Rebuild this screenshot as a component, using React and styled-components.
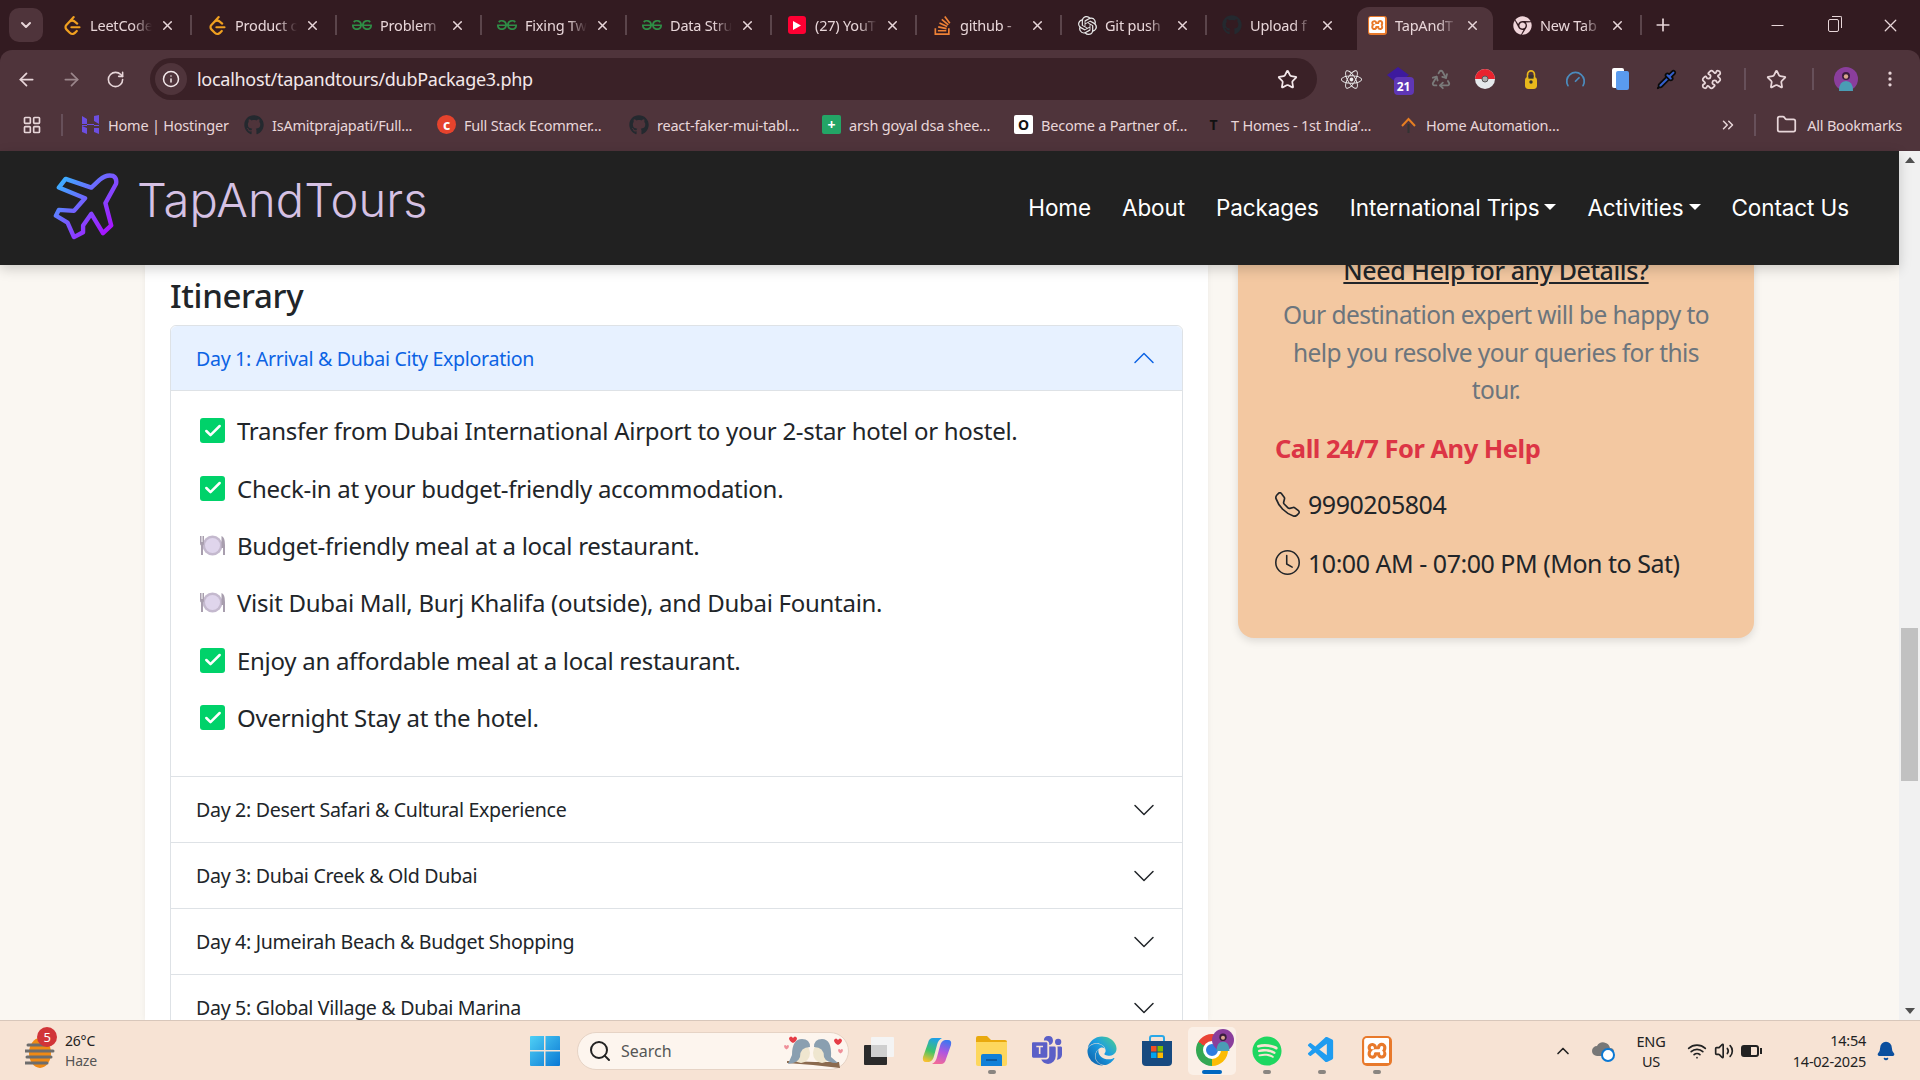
import styled, { createGlobalStyle } from 'styled-components'
import { ArrowLeft, ArrowRight, RotateCw, Info, Star, MoreVertical, X, Plus, Minus, ChevronDown, ChevronUp, Check, Search, Wifi, Volume2, Recycle, Gauge, Puzzle, Folder, LayoutGrid, ChevronsRight, Bell, Pipette } from 'lucide-react'
import { FaGithub, FaChrome, FaReact, FaSpotify, FaEdge } from 'react-icons/fa'
import { SiLeetcode, SiGeeksforgeeks, SiStackoverflow, SiOpenai, SiXampp } from 'react-icons/si'
import { BsChevronDown, BsChevronUp, BsTelephone, BsClock, BsMicrosoftTeams } from 'react-icons/bs'
import { VscVscode } from 'react-icons/vsc'

const UI = '"Noto Sans", "Open Sans", sans-serif'

const Global = createGlobalStyle`
  html, body { margin: 0; padding: 0; overflow: hidden; }
  body { font-family: ${UI}; color: #212529; }
  * { box-sizing: border-box; }
`

const Page = styled.div`
  width: 1920px;
  height: 1080px;
  display: flex;
  flex-direction: column;
  overflow: hidden;
  background: #331b21;
`

/* browser chrome */
const TabStrip = styled.div`
  height: 50px;
  flex: none;
  background: #331b21;
  display: flex;
  align-items: flex-end;
  padding-left: 9px;
  color: #e8d6d9;
`
const TabMenu = styled.div`
  width: 34px;
  height: 34px;
  margin: 0 4px 8px 0;
  border-radius: 10px;
  background: #4f343b;
  display: flex;
  align-items: center;
  justify-content: center;
  flex: none;
`
const Tab = styled.div`
  position: relative;
  width: 145px;
  height: 50px;
  flex: none;
  display: flex;
  align-items: center;
  padding: 0 17px 0 15px;
  gap: 8px;
  font-size: 14.5px;
  letter-spacing: -0.2px;
  &::before {
    content: '';
    position: absolute;
    top: 7px;
    bottom: 0;
    left: 5px;
    right: 4px;
    border-radius: 12px 12px 0 0;
    background: ${p => (p.$active ? '#4f343b' : 'transparent')};
  }
  &::after {
    content: '';
    position: absolute;
    right: 0;
    top: 15px;
    height: 20px;
    width: 2px;
    background: ${p => (p.$sep ? '#5b454b' : 'transparent')};
  }
  & > * { position: relative; z-index: 1; }
`
const TabIcon = styled.span`
  width: 20px;
  height: 20px;
  flex: none;
  display: flex;
  align-items: center;
  justify-content: center;
  color: ${p => p.$color || 'inherit'};
`
const AppTile = styled.span`
  width: ${p => p.$size}px;
  height: ${p => p.$size}px;
  border-radius: ${p => Math.round(p.$size / 6)}px;
  background: ${p => p.$bg};
  color: #fff;
  display: flex;
  align-items: center;
  justify-content: center;
`
const TabTitle = styled.span`
  flex: 1;
  overflow: hidden;
  white-space: nowrap;
  -webkit-mask-image: linear-gradient(90deg, #000 70%, transparent 100%);
`
const NewTab = styled.div`
  width: 42px;
  height: 50px;
  display: flex;
  align-items: center;
  justify-content: center;
`
const WindowControls = styled.div`
  margin-left: auto;
  display: flex;
  height: 50px;
  align-items: center;
  gap: 41px;
  padding-right: 19px;
`
const RestoreIcon = styled.span`
  position: relative;
  width: 11px;
  height: 13px;
  border: 1.5px solid #e8d6d9;
  border-radius: 2px;
  &::after {
    content: '';
    position: absolute;
    top: -4px;
    right: -4px;
    width: 9px;
    height: 11px;
    border-top: 1.5px solid #e8d6d9;
    border-right: 1.5px solid #e8d6d9;
    border-radius: 0 2px 0 0;
  }
`
const Toolbar = styled.div`
  height: 50px;
  flex: none;
  background: #4f343b;
  border-radius: 12px 12px 0 0;
  display: flex;
  align-items: flex-end;
  padding: 0 0 0 16px;
  color: #e8d6d9;
`
const NavButtons = styled.div`
  width: 134px;
  height: 42px;
  flex: none;
  display: flex;
  align-items: center;
  gap: 24px;
`
const AddressBar = styled.div`
  width: 1167px;
  height: 42px;
  flex: none;
  border-radius: 21px;
  background: #3a2127;
  display: flex;
  align-items: center;
  padding: 0 19px 0 5px;
  font-size: 18px;
  letter-spacing: -0.28px;
  color: #f3e8ea;
`
const SiteInfo = styled.span`
  width: 32px;
  height: 32px;
  border-radius: 50%;
  background: #4f343b;
  display: flex;
  align-items: center;
  justify-content: center;
  margin-right: 10px;
`
const AddressText = styled.span`
  flex: 1;
`
const Extensions = styled.div`
  height: 42px;
  flex: 1;
  display: flex;
  align-items: center;
  padding-left: 11.5px;
`
const ExtSlot = styled.span`
  position: relative;
  width: 45px;
  height: 24px;
  flex: none;
  margin-left: ${p => p.$ml || 0}px;
  display: flex;
  justify-content: center;
  align-items: center;
  color: ${p => p.$color || 'inherit'};
`
const Divider = styled.span`
  width: 2px;
  height: ${p => p.$h || 20}px;
  background: #67505a;
  flex: none;
  margin: ${p => p.$m || '0'};
`
const CountBadge = styled.span`
  position: absolute;
  left: 18px;
  top: 10px;
  width: 20px;
  height: 18px;
  border-radius: 4px;
  background: #5f37b5;
  color: #fff;
  font-size: 12px;
  font-weight: 700;
  display: flex;
  align-items: center;
  justify-content: center;
`
const Bookmarks = styled.div`
  height: 51px;
  flex: none;
  background: #4f343b;
  display: flex;
  align-items: center;
  padding: 0 0 2px 22px;
  color: #e8d6d9;
  font-size: 14.5px;
  letter-spacing: -0.22px;
`
const Bookmark = styled.div`
  width: ${p => p.$w}px;
  flex: none;
  display: flex;
  align-items: center;
  gap: 8px;
  padding-left: ${p => p.$pad ?? 10}px;
  white-space: nowrap;
`
const BookmarkTail = styled.div`
  margin-left: auto;
  display: flex;
  align-items: center;
  padding-right: 18px;
  gap: 10px;
`
const CircleDot = styled.span`
  width: 19px;
  height: 19px;
  border-radius: ${p => (p.$square ? '2px' : '50%')};
  background: ${p => p.$bg};
  color: ${p => p.$fg || '#fff'};
  display: flex;
  align-items: center;
  justify-content: center;
  font-size: 14px;
  font-weight: 700;
  flex: none;
`

/* the page in the tab */
const Viewport = styled.div`
  flex: 1;
  min-height: 0;
  display: flex;
`
const Site = styled.div`
  width: 1899px;
  display: flex;
  flex-direction: column;
`
const Navbar = styled.header`
  height: 114px;
  flex: none;
  background: #212121;
  box-shadow: 0 4px 12px rgba(0, 0, 0, 0.18);
  position: relative;
  z-index: 2;
  display: flex;
  align-items: center;
  padding: 0 50px 0 53px;
`
const Brand = styled.div`
  display: flex;
  align-items: center;
  gap: 18px;
  margin-top: -4px;
`
const BrandName = styled.span`
  font-family: Inter, sans-serif;
  font-size: 47px;
  font-weight: 300;
  letter-spacing: 0.1px;
  color: #d6c1e4;
  margin-bottom: 14px;
`
const NavLinks = styled.nav`
  margin-left: auto;
  margin-top: -2px;
  display: flex;
  align-items: center;
  gap: 31px;
  font-family: Inter, sans-serif;
  font-size: 22.5px;
  font-weight: 400;
  letter-spacing: -0.1px;
  color: #fff;
`
const NavLink = styled.a`
  display: flex;
  align-items: center;
  gap: 5px;
`
const Caret = styled.span`
  width: 0;
  height: 0;
  border-top: 6px solid #fff;
  border-left: 6px solid transparent;
  border-right: 6px solid transparent;
`
const Content = styled.main`
  flex: 1;
  min-height: 0;
  overflow: hidden;
  background: #faf7f2;
  display: flex;
  align-items: flex-start;
  padding-left: 145px;
  gap: 30px;
`
const MainCard = styled.section`
  width: 1063px;
  height: 100%;
  flex: none;
  background: #fff;
  box-shadow: 0 0 6px rgba(0, 0, 0, 0.06);
  padding: 12px 25px 0;
`
const Heading = styled.h2`
  margin: 0 0 11px;
  font-size: 33px;
  line-height: 37px;
  font-weight: 500;
  letter-spacing: -0.35px;
  color: #212529;
`
const Accordion = styled.div`
  border: 1px solid #dee2e6;
  border-radius: 6px;
`
const AccordionHeader = styled.div`
  height: ${p => (p.$open ? 65 : 66)}px;
  display: flex;
  align-items: center;
  justify-content: space-between;
  padding: 0 26px 0 25px;
  font-size: 19.6px;
  letter-spacing: -0.32px;
  color: ${p => (p.$open ? '#0c63e4' : '#212529')};
  background: ${p => (p.$open ? '#e7f1ff' : '#fff')};
  border-bottom: 1px solid #dee2e6;
  border-radius: ${p => (p.$open ? '6px 6px 0 0' : '0')};
`
const ItemList = styled.ul`
  list-style: none;
  margin: 0;
  padding: 11px 29px 30px;
  border-bottom: 1px solid #dee2e6;
`
const Item = styled.li`
  height: 57.4px;
  display: flex;
  align-items: center;
  gap: 12px;
  font-size: 24px;
  letter-spacing: -0.28px;
  color: #212529;
`
const CheckBox = styled.span`
  width: 25px;
  height: 25px;
  flex: none;
  border-radius: 3px;
  background: #00d26a;
  color: #fff;
  display: flex;
  align-items: center;
  justify-content: center;
`
const SideCard = styled.aside`
  width: 516px;
  flex: none;
  margin-top: -20px;
  padding: 9px 37px 57px;
  background: #f3c8a1;
  border-radius: 16px;
  box-shadow: 0 3px 8px rgba(0, 0, 0, 0.12);
`
const HelpTitle = styled.h3`
  margin: 0 0 10px;
  font-size: 25px;
  line-height: 32px;
  font-weight: 500;
  letter-spacing: -0.42px;
  text-align: center;
  text-decoration: underline;
  color: #212529;
`
const HelpText = styled.p`
  margin: 0;
  font-size: 24.5px;
  line-height: 37.6px;
  letter-spacing: -0.57px;
  text-align: center;
  color: #6c757d;
`
const CallLine = styled.h4`
  margin: 23px 0 0;
  font-size: 25.5px;
  line-height: 32px;
  font-weight: 700;
  letter-spacing: -0.5px;
  color: #dc3545;
`
const ContactRow = styled.div`
  display: flex;
  align-items: center;
  gap: 8px;
  margin-top: 22.5px;
  height: 36px;
  font-size: 25px;
  letter-spacing: -0.48px;
  color: #212529;
`
const Scrollbar = styled.div`
  width: 21px;
  background: #f1f1f1;
  display: flex;
  flex-direction: column;
  align-items: center;
  justify-content: space-between;
  padding: 6px 0;
  position: relative;
`
const Arrow = styled.span`
  width: 0;
  height: 0;
  border-left: 5px solid transparent;
  border-right: 5px solid transparent;
  border-${p => (p.$down ? 'top' : 'bottom')}: 6px solid #505050;
`
const Thumb = styled.span`
  position: absolute;
  top: 477px;
  left: 2px;
  width: 17px;
  height: 153px;
  background: #c1c1c1;
`

/* windows taskbar */
const Taskbar = styled.footer`
  height: 60px;
  flex: none;
  background: #f7e3d4;
  border-top: 1px solid #d8c7bb;
  display: grid;
  grid-template-columns: 530px auto 1fr;
  align-items: center;
  color: #222;
`
const Weather = styled.div`
  display: flex;
  align-items: center;
  gap: 8px;
  padding-left: 25px;
  font-size: 14px;
  line-height: 20px;
  letter-spacing: -0.2px;
`
const WeatherIcon = styled.span`
  position: relative;
  width: 32px;
  height: 34px;
  display: block;
`
const AlertBadge = styled.span`
  position: absolute;
  top: -7px;
  left: 12px;
  width: 20px;
  height: 20px;
  border-radius: 50%;
  background: #d13438;
  color: #fff;
  font-size: 13px;
  display: flex;
  align-items: center;
  justify-content: center;
`
const WeatherSub = styled.div`
  color: #555;
`
const Center = styled.div`
  display: flex;
  align-items: center;
`
const SearchBox = styled.div`
  width: 272px;
  height: 38px;
  margin-left: 17px;
  border-radius: 19px;
  background: #fdf5ee;
  border: 1px solid #e6d3c5;
  display: flex;
  align-items: center;
  gap: 9px;
  padding: 0 2px 0 10px;
  font-size: 16px;
  color: #555;
`
const SearchLabel = styled.span`
  flex: 1;
`
const DockSlot = styled.div`
  position: relative;
  width: ${p => (p.$active ? 48 : p.$w || 55)}px;
  height: 48px;
  flex: none;
  border-radius: 5px;
  display: flex;
  align-items: center;
  justify-content: center;
  margin: 0 ${p => (p.$active ? 3.5 : 0)}px;
  background: ${p => (p.$active ? '#fbf0e7' : 'transparent')};
  &::after {
    content: '';
    display: ${p => (p.$dot || p.$active ? 'block' : 'none')};
    position: absolute;
    bottom: 1px;
    left: 50%;
    transform: translateX(-50%);
    width: ${p => (p.$active ? 20 : 8)}px;
    height: 4px;
    border-radius: 2px;
    background: ${p => (p.$active ? '#0067c0' : '#8a8580')};
  }
`
const ChromeLogo = styled.span`
  width: 32px;
  height: 32px;
  border-radius: 50%;
  background: conic-gradient(from -60deg, #ea4335 0 120deg, #fbbc04 120deg 240deg, #34a853 240deg 360deg);
  display: flex;
  align-items: center;
  justify-content: center;
  margin-top: -2px;
  &::after {
    content: '';
    width: 12px;
    height: 12px;
    border-radius: 50%;
    background: #2f7de1;
    border: 3px solid #fff;
    box-sizing: content-box;
  }
`
const AvatarOverlay = styled.span`
  position: absolute;
  top: 2px;
  right: 2px;
`
const Tray = styled.div`
  justify-self: end;
  display: flex;
  align-items: center;
  padding-right: 14px;
  font-size: 14px;
`
const TraySlot = styled.span`
  width: ${p => p.$w || 28}px;
  flex: none;
  display: flex;
  justify-content: center;
`
const Lang = styled.div`
  width: 44px;
  text-align: center;
  line-height: 20px;
  font-size: 14.5px;
  letter-spacing: -0.2px;
  margin-right: 10px;
`
const Clock = styled.div`
  width: 100px;
  text-align: right;
  line-height: 21px;
  font-size: 14.5px;
  letter-spacing: -0.25px;
  margin-left: 3px;
`
const BatteryIcon = styled.span`
  position: relative;
  width: 18px;
  height: 12px;
  border: 2px solid #222;
  border-radius: 3px;
  display: block;
  background: linear-gradient(90deg, #222 55%, transparent 55%);
  &::after {
    content: '';
    position: absolute;
    right: -5px;
    top: 1px;
    width: 2px;
    height: 6px;
    background: #222;
  }
`

const YoutubeIcon = () => (
  <AppTile $size={18} $bg="#ff0033">
    <svg width="8" height="9" viewBox="0 0 8 9"><path d="M0 0l8 4.5L0 9z" fill="#fff" /></svg>
  </AppTile>
)

const XamppTile = ({ size }) => (
  <AppTile $size={size} $bg="#e8792b">
    <SiXampp size={size * 0.86} />
  </AppTile>
)

const tabs = [
  { title: 'LeetCode', icon: <SiLeetcode size={19} />, color: '#f0a020', sep: true },
  { title: 'Product o', icon: <SiLeetcode size={19} />, color: '#f0a020', sep: true },
  { title: 'Problem', icon: <SiGeeksforgeeks size={20} />, color: '#2f8d46', sep: true },
  { title: 'Fixing Tw', icon: <SiGeeksforgeeks size={20} />, color: '#2f8d46', sep: true },
  { title: 'Data Stru', icon: <SiGeeksforgeeks size={20} />, color: '#2f8d46', sep: true },
  { title: '(27) YouT', icon: <YoutubeIcon />, sep: true },
  { title: 'github -', icon: <SiStackoverflow size={19} />, color: '#ef8236', sep: true },
  { title: 'Git push', icon: <SiOpenai size={19} />, color: '#e8e8e8', sep: true },
  { title: 'Upload f', icon: <FaGithub size={20} />, color: '#24292f' },
  { title: 'TapAndT', icon: <XamppTile size={19} />, active: true },
  { title: 'New Tab', icon: <FaChrome size={19} />, color: '#f0d5da', sep: true },
]

const marks = [
  { w: 153, pad: 0, label: 'Home | Hostinger', icon: <svg width="19" height="20" viewBox="0 0 19 20"><path d="M1 1l5 3v5H1zM13 1l5-1v9l-5-3zM1 11h17v-1H1zM1 11l5 2v6l-5-2zM13 13h5v6l-5-2zM6 9h7v2H6z" fill="#6c4ee0" /></svg> },
  { w: 193, label: 'IsAmitprajapati/Full...', icon: <FaGithub size={20} color="#24292f" /> },
  { w: 192, label: 'Full Stack Ecommer...', icon: <CircleDot $bg="#e5432d">c</CircleDot> },
  { w: 193, label: 'react-faker-mui-tabl...', icon: <FaGithub size={20} color="#24292f" /> },
  { w: 192, label: 'arsh goyal dsa shee...', icon: <CircleDot $bg="#23a566" $square>+</CircleDot> },
  { w: 190, label: 'Become a Partner of...', icon: <CircleDot $bg="#fff" $fg="#111" $square>O</CircleDot> },
  { w: 195, label: 'T Homes - 1st India’...', icon: <CircleDot $bg="transparent" $fg="#111">T</CircleDot> },
  { w: 175, label: 'Home Automation...', icon: <svg width="19" height="20" viewBox="0 0 19 20" fill="none"><path d="M3 11l6.5-7 6.5 7" stroke="#e67e22" strokeWidth="2" /><path d="M9.5 9v9" stroke="#333" strokeWidth="2" /></svg> },
]

const plan = [
  { text: 'Transfer from Dubai International Airport to your 2-star hotel or hostel.', meal: false },
  { text: 'Check-in at your budget-friendly accommodation.', meal: false },
  { text: 'Budget-friendly meal at a local restaurant.', meal: true },
  { text: 'Visit Dubai Mall, Burj Khalifa (outside), and Dubai Fountain.', meal: true },
  { text: 'Enjoy an affordable meal at a local restaurant.', meal: false },
  { text: 'Overnight Stay at the hotel.', meal: false },
]

const otherDays = [
  'Day 2: Desert Safari & Cultural Experience',
  'Day 3: Dubai Creek & Old Dubai',
  'Day 4: Jumeirah Beach & Budget Shopping',
  'Day 5: Global Village & Dubai Marina',
]

const PlaneLogo = () => (
  <svg width="66" height="67" viewBox="-1 -1 68 69" fill="none">
    <defs>
      <linearGradient id="planeGrad" x1="0" y1="0" x2="1" y2="1">
        <stop offset="0" stopColor="#2fc0ff" />
        <stop offset="0.5" stopColor="#7b55ff" />
        <stop offset="1" stopColor="#b400ff" />
      </linearGradient>
    </defs>
    <path
      d="M61 2Q65 4 64 10L53 30L59 53L50.5 61L38.5 41L30 53L30 60L20.6 65L14 50L2 43L5 37L20.6 38L32 25L5 14L12 5L38.5 14L47 6Q54 0 61 2Z"
      stroke="url(#planeGrad)"
      strokeWidth="4.5"
      strokeLinejoin="round"
    />
  </svg>
)

const PlateIcon = () => (
  <svg width="25" height="25" viewBox="0 0 25 25">
    <circle cx="12.5" cy="12.5" r="10" fill="#c4b9ce" />
    <circle cx="12.5" cy="12.5" r="7.5" fill="#dfd5ec" />
    <path d="M0 3v7q0 2 1 2.500V22h2v-9.500q1-.5 1-2.500V3H3v6H2.500V3h-1v6H1V3zM21.500 3q3.500 1 3.500 9v10h-2v-7h-1.500z" fill="#a89eae" />
  </svg>
)

const Avatar = ({ size }) => (
  <svg width={size} height={size} viewBox="0 0 24 24">
    <circle cx="12" cy="12" r="12" fill="#8a3e9c" />
    <path d="M5 24q0-10 7-10t7 10z" fill="#4a9db5" />
    <circle cx="12" cy="9" r="4" fill="#3a1d3d" />
    <circle cx="12" cy="9.5" r="2.2" fill="#d9a78e" />
  </svg>
)

const Windows = () => (
  <svg width="30" height="30" viewBox="0 0 30 30">
    <defs>
      <linearGradient id="winGrad" x1="0" y1="0" x2="1" y2="1">
        <stop offset="0" stopColor="#4fd0f5" />
        <stop offset="1" stopColor="#0a78d4" />
      </linearGradient>
      <linearGradient id="edgeGrad" x1="1" y1="0" x2="0" y2="1">
        <stop offset="0" stopColor="#4fd18b" />
        <stop offset="0.45" stopColor="#1b9de2" />
        <stop offset="1" stopColor="#0c59a4" />
      </linearGradient>
    </defs>
    <path d="M0 1q0-1 1-1h13v14H0zM15.500 0H29q1 0 1 1v13H15.500zM0 15.500h14V30H1q-1 0-1-1zM15.500 15.500H30V29q0 1-1 1H15.500z" fill="url(#winGrad)" />
  </svg>
)

const Birds = () => (
  <svg width="62" height="36" viewBox="0 0 62 36">
    <path d="M3 30l26 2 27 3-1-6-24 0-28-1z" fill="#8b6a4e" />
    <ellipse cx="17" cy="20" rx="9" ry="10" fill="#efe6cf" />
    <path d="M8 22q0-16 10-16 8 0 8 8-10 0-10 10-2 6-12 7z" fill="#8a9fb0" />
    <ellipse cx="38" cy="20" rx="9" ry="10" fill="#efe6cf" />
    <path d="M47 24q1-18-9-18-8 0-8 8 10 0 10 10 2 6 14 6z" fill="#8a9fb0" />
    <path d="M5 5q2-3 4 0 2-3 4 0 0 3-4 5-4-2-4-5zM50 7q2-3 4 0 2-3 4 0 0 3-4 5-4-2-4-5z" fill="#e53c46" />
    <path d="M0 13q1-2 2.500 0 1.500-2 2.500 0 0 2-2.500 3.500Q0 15 0 13zM54 17q1-2 2.500 0 1.500-2 2.500 0 0 2-2.500 3.500Q54 19 54 17z" fill="#ef8f99" />
  </svg>
)

const Copilot = () => (
  <svg width="30" height="30" viewBox="0 0 30 30">
    <defs>
      <linearGradient id="copA" x1="0.6" y1="0" x2="0.3" y2="1">
        <stop offset="0" stopColor="#1f9fe8" />
        <stop offset="0.55" stopColor="#3fc46a" />
        <stop offset="1" stopColor="#f7c030" />
      </linearGradient>
      <linearGradient id="copB" x1="0.6" y1="0" x2="0.3" y2="1">
        <stop offset="0" stopColor="#f06a9a" />
        <stop offset="0.5" stopColor="#b055e0" />
        <stop offset="1" stopColor="#3a78f0" />
      </linearGradient>
    </defs>
    <path d="M11 2H20Q16 4 15 9L12 20Q11 25 7 26H4Q0 26 1 21L6 7Q7 2 11 2Z" fill="url(#copA)" />
    <path d="M11 2H20Q16 4 15 9L12 20Q11 25 7 26H4Q0 26 1 21L6 7Q7 2 11 2Z" fill="url(#copB)" transform="rotate(180 15 15)" />
  </svg>
)

const Files = () => (
  <svg width="31" height="30" viewBox="0 0 31 30">
    <path d="M0 2q0-2 2-2h9l4 4h14q2 0 2 2v3H0z" fill="#e9a90e" />
    <path d="M0 6h31v22q0 2-2 2H2q-2 0-2-2z" fill="#fdd75e" />
    <path d="M5 20q0-2 2-2h17q2 0 2 2v10H5z" fill="#1180d8" />
    <path d="M10 24h11" stroke="#0b4f90" strokeWidth="1.5" />
  </svg>
)

const Store = () => (
  <svg width="30" height="31" viewBox="0 0 30 31" fill="none">
    <path d="M8 6V3q0-2 2-2h10q2 0 2 2v3" stroke="#2aa8e8" strokeWidth="2" />
    <path d="M0 6h30v21q0 4-4 4H4q-4 0-4-4z" fill="#174a80" />
    <path d="M9 11h5.500v5.500H9z" fill="#f25022" />
    <path d="M15.500 11H21v5.500h-5.500z" fill="#7fba00" />
    <path d="M9 17.500h5.500V23H9z" fill="#00a4ef" />
    <path d="M15.500 17.500H21V23h-5.500z" fill="#ffb900" />
  </svg>
)

const TaskView = () => (
  <svg width="30" height="28" viewBox="0 0 30 28">
    <rect x="7" y="0" width="23" height="20" rx="1" fill="#f4f4f4" />
    <rect x="0" y="8" width="23" height="20" rx="1" fill="#2b2b2b" />
    <rect x="7" y="8" width="16" height="12" fill="#cfcfcf" />
  </svg>
)

const SunIcon = () => (
  <svg width="32" height="34" viewBox="0 0 32 34">
    <ellipse cx="15" cy="19" rx="11" ry="15" fill="#f08a14" />
    <path d="M3 11h20M0 17h28M2 23h24M0 29h22" stroke="#6d6d6d" strokeWidth="3" strokeLinecap="round" />
  </svg>
)

const App = () => {
  return (
    <Page>
      <Global />
      <TabStrip>
        <TabMenu><ChevronDown size={16} strokeWidth={3} /></TabMenu>
        {tabs.map(t => (
          <Tab key={t.title} $active={t.active} $sep={t.sep}>
            <TabIcon $color={t.color}>{t.icon}</TabIcon>
            <TabTitle>{t.title}</TabTitle>
            <X size={15} strokeWidth={2.4} />
          </Tab>
        ))}
        <NewTab><Plus size={20} /></NewTab>
        <WindowControls>
          <Minus size={19} strokeWidth={1.4} />
          <RestoreIcon />
          <X size={21} strokeWidth={1.4} />
        </WindowControls>
      </TabStrip>
      <Toolbar>
        <NavButtons>
          <ArrowLeft size={21} />
          <ArrowRight size={21} color="#9b868b" />
          <RotateCw size={19} />
        </NavButtons>
        <AddressBar>
          <SiteInfo><Info size={18} /></SiteInfo>
          <AddressText>localhost/tapandtours/dubPackage3.php</AddressText>
          <Star size={21} />
        </AddressBar>
        <Extensions>
          <ExtSlot><FaReact size={21} color="#eee" /></ExtSlot>
          <ExtSlot $ml={2} $color="#3d1a9e">
            <svg width="22" height="24" viewBox="0 0 22 24"><path d="M11 0l11 8-11 9L0 8z" fill="currentColor" /></svg>
            <CountBadge>21</CountBadge>
          </ExtSlot>
          <ExtSlot $ml={-2} $color="#7a7a7a"><Recycle size={22} /></ExtSlot>
          <ExtSlot $ml={-1}>
            <svg width="20" height="20" viewBox="0 0 20 20"><circle cx="10" cy="10" r="10" fill="#e5e9ec" /><path d="M0 10a10 10 0 0 1 20 0z" fill="#e8232e" /><circle cx="10" cy="10" r="3" fill="#aaa" stroke="#555" /></svg>
          </ExtSlot>
          <ExtSlot $ml={1}>
            <svg width="12" height="19" viewBox="0 0 14 22"><rect y="8" width="14" height="14" rx="4" fill="#e8b81c" /><path d="M3 9V5a4 4 0 0 1 8 0v4" stroke="#e8b81c" strokeWidth="2" fill="none" /><rect x="4" y="6" width="6" height="4" fill="#333" /><circle cx="7" cy="14" r="2" fill="#333" /></svg>
          </ExtSlot>
          <ExtSlot $ml={-1} $color="#4b8bbd"><Gauge size={21} /></ExtSlot>
          <ExtSlot>
            <svg width="17" height="22" viewBox="0 0 17 22"><rect width="12" height="20" rx="2" fill="#fff" /><rect x="4" y="3" width="13" height="19" rx="2" fill="#5a9bef" /></svg>
          </ExtSlot>
          <ExtSlot $ml={1} $color="#0a0a0a"><Pipette size={21} fill="#3460cf" /></ExtSlot>
          <ExtSlot><Puzzle size={21} /></ExtSlot>
          <Divider $h={22} $m="0 0 0 10.5px" />
          <ExtSlot $ml={8}><Star size={21} /></ExtSlot>
          <Divider $h={22} $m="0 0 0 12.5px" />
          <ExtSlot $ml={10}><Avatar size={24} /></ExtSlot>
          <ExtSlot $ml={-1}><MoreVertical size={20} /></ExtSlot>
        </Extensions>
      </Toolbar>
      <Bookmarks>
        <LayoutGrid size={20} />
        <Divider $h={22} $m="0 18px 0 19px" />
        {marks.map(m => (
          <Bookmark key={m.label} $w={m.w} $pad={m.pad}>
            {m.icon}
            <span>{m.label}</span>
          </Bookmark>
        ))}
        <BookmarkTail>
          <ChevronsRight size={18} />
          <Divider $h={22} $m="0 10px 0 7px" />
          <Folder size={21} />
          <span>All Bookmarks</span>
        </BookmarkTail>
      </Bookmarks>
      <Viewport>
        <Site>
          <Navbar>
            <Brand><PlaneLogo /><BrandName>TapAndTours</BrandName></Brand>
            <NavLinks>
              <NavLink>Home</NavLink>
              <NavLink>About</NavLink>
              <NavLink>Packages</NavLink>
              <NavLink>International Trips<Caret /></NavLink>
              <NavLink>Activities<Caret /></NavLink>
              <NavLink>Contact Us</NavLink>
            </NavLinks>
          </Navbar>
          <Content>
            <MainCard>
              <Heading>Itinerary</Heading>
              <Accordion>
                <AccordionHeader $open>
                  Day 1: Arrival &amp; Dubai City Exploration
                  <BsChevronUp size={24} />
                </AccordionHeader>
                <ItemList>
                  {plan.map(p => (
                    <Item key={p.text}>
                      {p.meal ? <PlateIcon /> : <CheckBox><Check size={20} strokeWidth={3} /></CheckBox>}
                      {p.text}
                    </Item>
                  ))}
                </ItemList>
                {otherDays.map(d => (
                  <AccordionHeader key={d}>
                    {d}
                    <BsChevronDown size={24} />
                  </AccordionHeader>
                ))}
              </Accordion>
            </MainCard>
            <SideCard>
              <HelpTitle>Need Help for any Details?</HelpTitle>
              <HelpText>Our destination expert will be happy to help you resolve your queries for this tour.</HelpText>
              <CallLine>Call 24/7 For Any Help</CallLine>
              <ContactRow><BsTelephone size={25} />9990205804</ContactRow>
              <ContactRow><BsClock size={25} />10:00 AM - 07:00 PM (Mon to Sat)</ContactRow>
            </SideCard>
          </Content>
        </Site>
        <Scrollbar>
          <Arrow />
          <Thumb />
          <Arrow $down />
        </Scrollbar>
      </Viewport>
      <Taskbar>
        <Weather>
          <WeatherIcon>
            <SunIcon />
            <AlertBadge>5</AlertBadge>
          </WeatherIcon>
          <div>
            <div>26°C</div>
            <WeatherSub>Haze</WeatherSub>
          </div>
        </Weather>
        <Center>
          <Windows />
          <SearchBox>
            <Search size={24} color="#222" strokeWidth={2} />
            <SearchLabel>Search</SearchLabel>
            <Birds />
          </SearchBox>
          <DockSlot $w={60}><TaskView /></DockSlot>
          <DockSlot><Copilot /></DockSlot>
          <DockSlot $dot><Files /></DockSlot>
          <DockSlot><BsMicrosoftTeams size={30} color="#5b5fc7" /></DockSlot>
          <DockSlot><FaEdge size={30} fill="url(#edgeGrad)" /></DockSlot>
          <DockSlot><Store /></DockSlot>
          <DockSlot $active>
            <ChromeLogo />
            <AvatarOverlay><Avatar size={22} /></AvatarOverlay>
          </DockSlot>
          <DockSlot $dot><FaSpotify size={30} color="#1ed760" /></DockSlot>
          <DockSlot $dot><VscVscode size={31} color="#1f9cf0" /></DockSlot>
          <DockSlot $dot><XamppTile size={30} /></DockSlot>
        </Center>
        <Tray>
          <TraySlot><ChevronUp size={20} /></TraySlot>
          <TraySlot $w={52}>
            <svg width="24" height="22" viewBox="0 0 24 22"><path d="M6 16a5 5 0 0 1 0-10 7 7 0 0 1 13 2 4 4 0 0 1 0 8z" fill="#777" /><circle cx="17" cy="15" r="6" fill="#fff" stroke="#0a78d4" strokeWidth="2" /></svg>
          </TraySlot>
          <Lang>ENG<br />US</Lang>
          <TraySlot $w={28}><Wifi size={20} /></TraySlot>
          <TraySlot $w={26}><Volume2 size={20} /></TraySlot>
          <TraySlot $w={26}><BatteryIcon /></TraySlot>
          <Clock>14:54<br />14-02-2025</Clock>
          <TraySlot $w={40}><Bell size={20} fill="#0b4f9e" color="#0b4f9e" /></TraySlot>
        </Tray>
      </Taskbar>
    </Page>
  )
}

export default App
